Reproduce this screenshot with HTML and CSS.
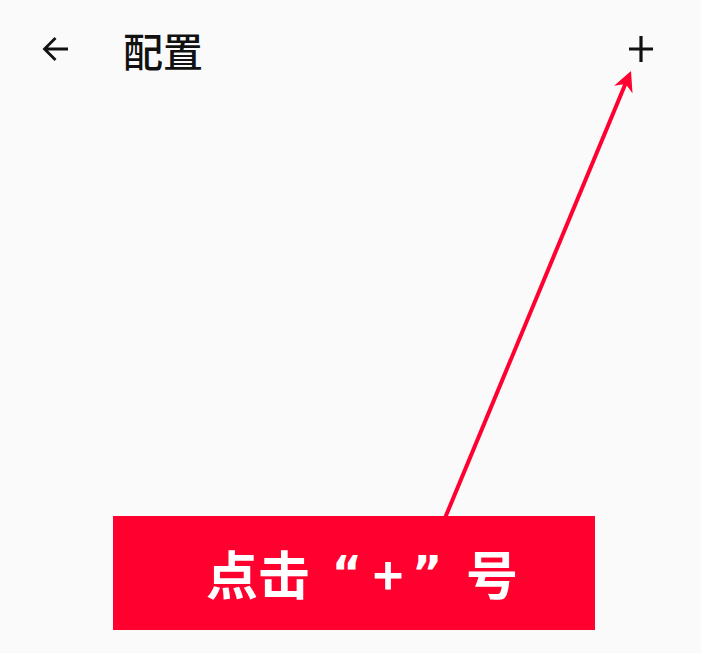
FILE: index.html
```html
<!DOCTYPE html>
<html lang="zh-CN">
<head>
<meta charset="utf-8">
<title>配置</title>
<link rel="stylesheet" href="styles.css">
</head>
<body>
<div class="page">
  <header class="topbar">
    <span class="back">
      <svg width="28" height="28" viewBox="0 0 28 28"><path d="M27 14H3.5M14.5 3L3.5 14l11 11" fill="none" stroke="#111" stroke-width="2.8"/></svg>
    </span>
    <h1 class="title">配置</h1>
    <span class="add">
      <svg width="24" height="26" viewBox="0 0 24 26"><path d="M0 13H24M12 0V26" fill="none" stroke="#111" stroke-width="3.2"/></svg>
    </span>
  </header>
  <main class="content">
    <div class="callout"><span class="ch">点</span><span class="ch">击</span><span class="ch q-open">“</span><span class="ch plus">+</span><span class="ch q-close">”</span><span class="ch">号</span></div>
  </main>
  <svg class="pointer" width="701" height="653" viewBox="0 0 701 653">
    <line x1="445" y1="518" x2="627" y2="80" stroke="#ff0030" stroke-width="4"/>
    <polygon points="631,71 632.5,93.3 625.6,83.9 614.1,85.7" fill="#ff0030"/>
  </svg>
</div>
</body>
</html>
```
FILE: styles.css
```css
html, body {
  margin: 0;
  padding: 0;
  background: #fafafa;
}
.page {
  position: relative;
  width: 701px;
  height: 653px;
  overflow: hidden;
  font-family: "Noto Sans CJK SC", "Noto Sans", sans-serif;
}
.topbar {
  display: flex;
  align-items: center;
  height: 104px;
  padding: 0 48px 0 41px;
}
.back {
  display: flex;
  width: 28px;
  height: 28px;
  margin-top: -6px;
}
.title {
  margin: -4px 0 0 54px;
  font-size: 40px;
  font-weight: 500;
  color: #111;
  line-height: 1;
}
.add {
  display: flex;
  margin-left: auto;
  margin-top: -6px;
}
.content {
  padding: 412px 0 0 113px;
}
.callout {
  box-sizing: border-box;
  display: flex;
  align-items: center;
  width: 482px;
  height: 114px;
  background: #ff002f;
  color: #fff;
  font-size: 52px;
  font-weight: 700;
  line-height: 1;
  padding-left: 93px;
  white-space: nowrap;
}
.ch {
  display: inline-block;
  width: 52px;
  text-align: center;
}
.q-open,
.q-close {
  font-family: "DejaVu Sans", sans-serif;
  font-size: 46px;
  font-weight: 700;
  line-height: 52px;
}
.q-open {
  text-align: right;
}
.q-close {
  text-align: left;
  text-indent: -2px;
}
.pointer {
  position: absolute;
  left: 0;
  top: 0;
  pointer-events: none;
}
```
